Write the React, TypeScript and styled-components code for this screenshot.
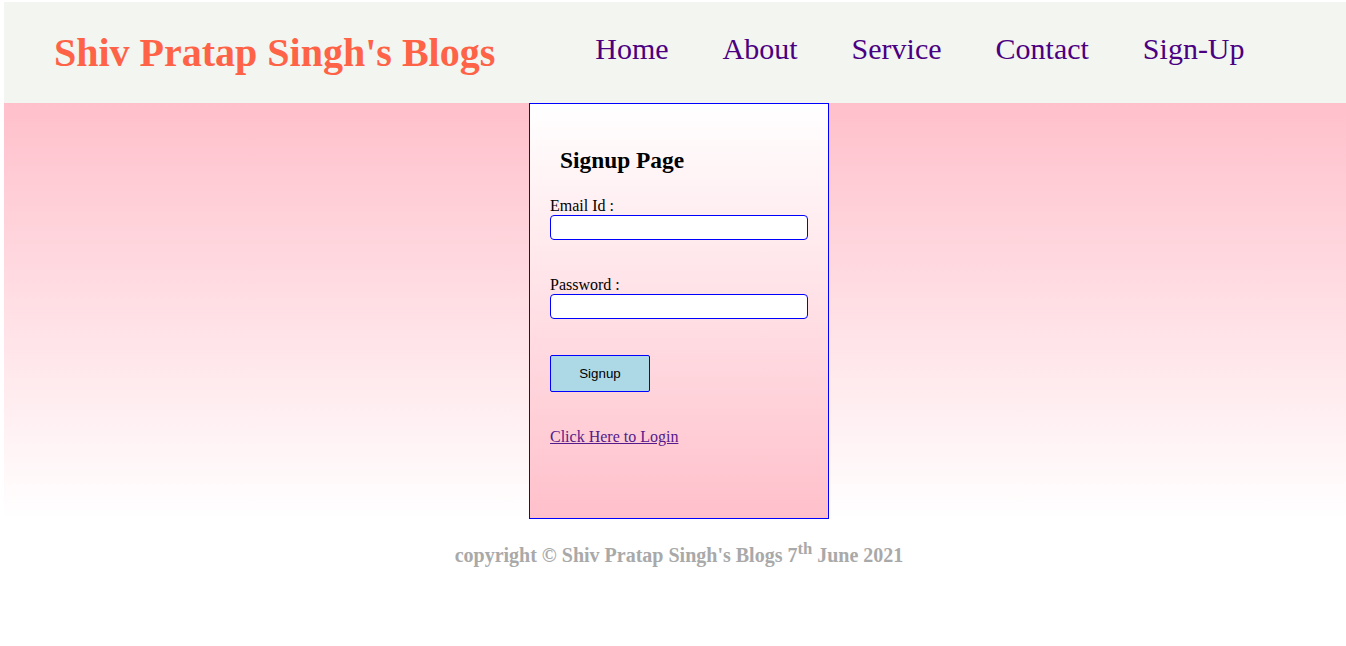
import React from "react";
import styled, { createGlobalStyle } from "styled-components";

const GlobalStyle = createGlobalStyle`
  html, body {
    margin: 0;
    padding: 0;
    overflow-x: hidden;
    background: #ffffff;
    font-family: "Liberation Serif", "Times New Roman", serif;
  }
`;

const Page = styled.div`
  padding: 2px 0 0 4px;
  width: 1350px;
`;

const Header = styled.header`
  display: flex;
  align-items: center;
  height: 101px;
  padding-left: 50px;
  background: #f3f5f0;
  box-sizing: border-box;
`;

const SiteTitle = styled.h1`
  margin: 0;
  font-size: 40px;
  line-height: 46px;
  font-weight: bold;
  color: #ff6347;
  white-space: nowrap;
`;

const Nav = styled.nav`
  display: flex;
  gap: 54px;
  margin-left: 100px;
  padding-bottom: 8px;
`;

const NavLink = styled.a`
  font-size: 30px;
  line-height: 34px;
  color: #4b0082;
  text-decoration: none;
  white-space: nowrap;
`;

const Hero = styled.main`
  display: flex;
  justify-content: center;
  height: 416px;
  background: linear-gradient(#ffc0cb, #ffffff);
`;

const Card = styled.form`
  display: flex;
  flex-direction: column;
  align-items: flex-start;
  width: 300px;
  height: 416px;
  box-sizing: border-box;
  padding: 43px 20px 0 20px;
  border: 1px solid blue;
  background: linear-gradient(#ffffff, #ffc0cb);
`;

const CardTitle = styled.h2`
  margin: 0 0 23px 0;
  padding-left: 10px;
  font-size: 23.4px;
  line-height: 27px;
  font-weight: bold;
  color: #000;
`;

const Label = styled.label<{ $gap?: number }>`
  display: block;
  margin-top: ${(p) => p.$gap ?? 0}px;
  font-size: 16px;
  line-height: 18px;
  color: #000;
`;

const Input = styled.input`
  display: block;
  width: 258px;
  height: 25px;
  box-sizing: border-box;
  margin: 0;
  padding: 1px 4px;
  border: 1px solid blue;
  border-radius: 4px;
  background: #fff;
  outline: none;
`;

const Button = styled.button`
  width: 100px;
  height: 37px;
  margin-top: 36px;
  box-sizing: border-box;
  border: 1px solid blue;
  border-radius: 2px;
  background: #add8e6;
  color: #000;
  font-family: "Liberation Sans", Arial, sans-serif;
  font-size: 13.33px;
  cursor: pointer;
`;

const LoginLink = styled.a`
  display: block;
  margin-top: 35px;
  font-size: 16px;
  line-height: 20px;
  color: #551a8b;
  text-decoration: underline;
`;

const Footer = styled.footer`
  margin-top: 24px;
  text-align: center;
  font-size: 20px;
  line-height: 24px;
  font-weight: bold;
  color: #a9a9a9;

  sup {
    line-height: 0;
  }
`;

export default function App() {
  return (
    <>
      <GlobalStyle />
      <Page>
        <Header>
          <SiteTitle>Shiv Pratap Singh's Blogs</SiteTitle>
          <Nav>
            <NavLink href="#">Home</NavLink>
            <NavLink href="#">About</NavLink>
            <NavLink href="#">Service</NavLink>
            <NavLink href="#">Contact</NavLink>
            <NavLink href="#">Sign-Up</NavLink>
          </Nav>
        </Header>
        <Hero>
          <Card onSubmit={(e) => e.preventDefault()}>
            <CardTitle>Signup Page</CardTitle>
            <Label htmlFor="email">Email Id :</Label>
            <Input id="email" type="email" />
            <Label htmlFor="password" $gap={36}>
              Password :
            </Label>
            <Input id="password" type="password" />
            <Button type="submit">Signup</Button>
            <LoginLink href="#">Click Here to Login</LoginLink>
          </Card>
        </Hero>
        <Footer>
          copyright © Shiv Pratap Singh's Blogs 7<sup>th</sup> June 2021
        </Footer>
      </Page>
    </>
  );
}
